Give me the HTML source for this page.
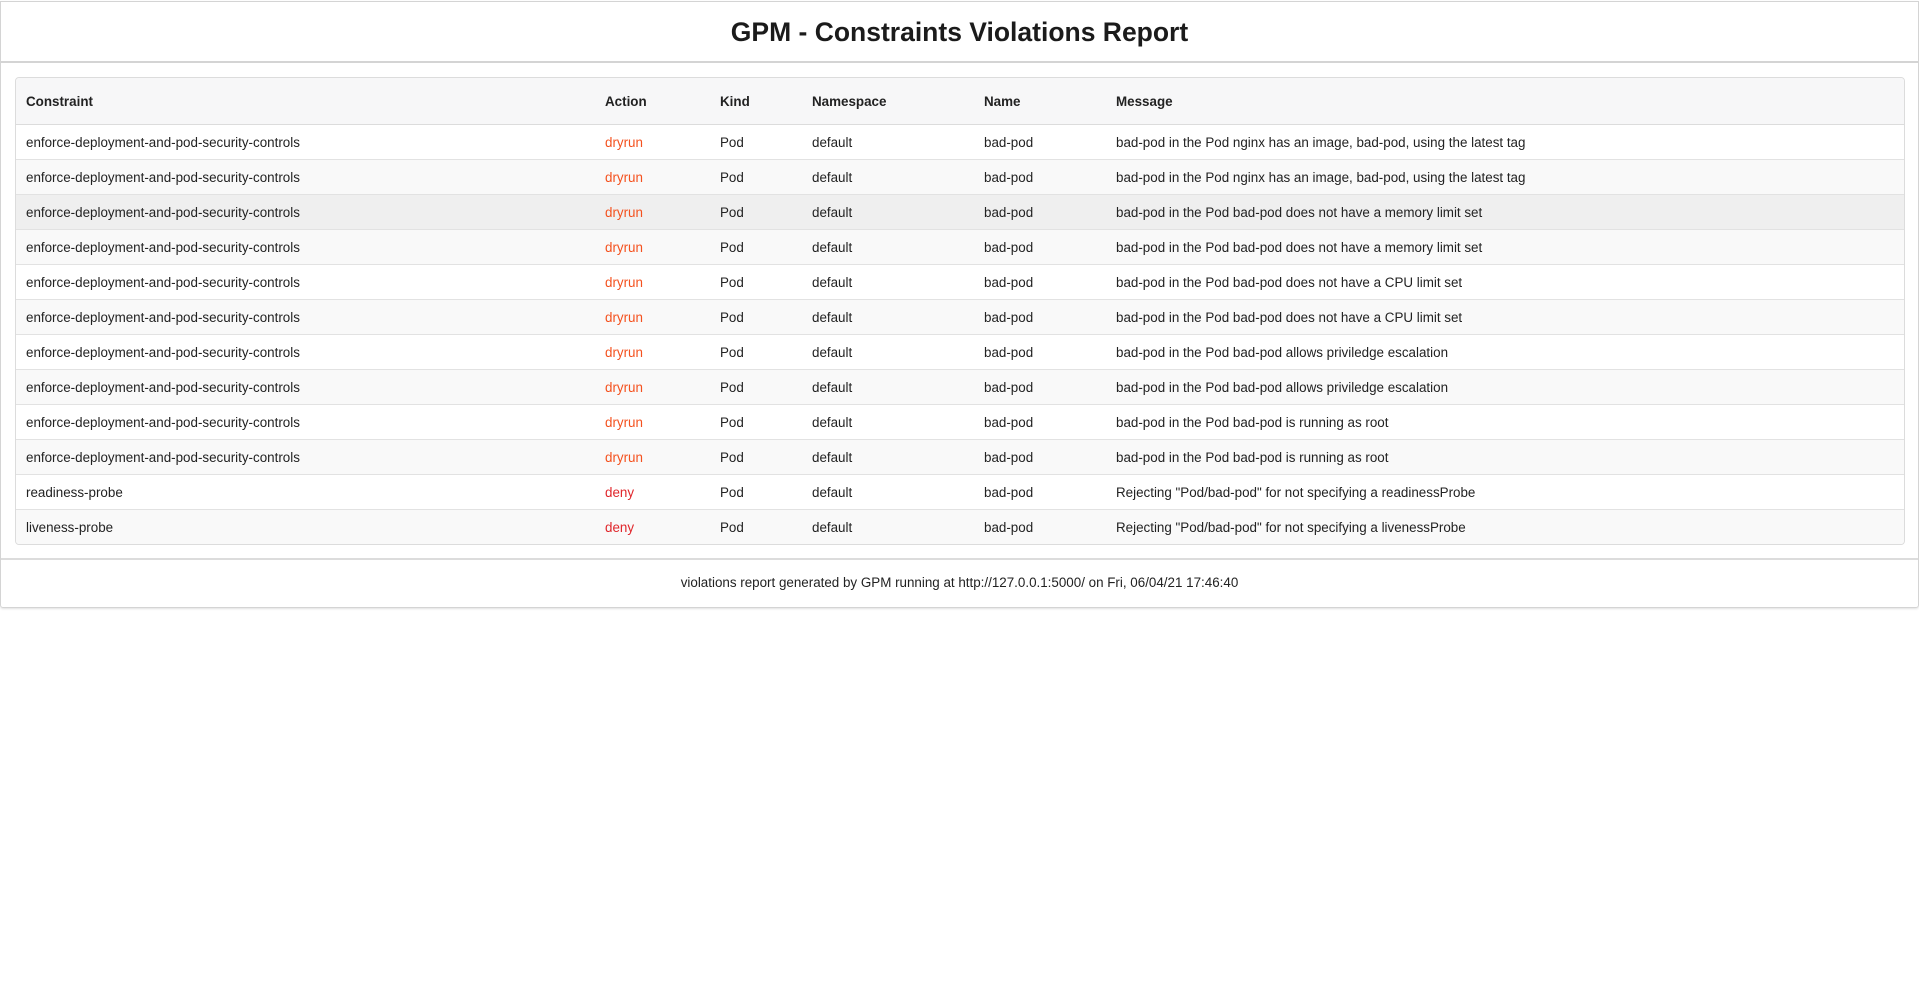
<!DOCTYPE html>
<html><head><meta charset="utf-8"><style>
html,body{margin:0;padding:0;background:#fff;width:1919px;height:995px;overflow:hidden;font-family:"Liberation Sans",sans-serif;color:#222;}
.panel{position:absolute;left:0;top:1px;width:1917px;height:605px;border:1px solid #d4d4d4;border-radius:0 0 3px 3px;box-shadow:0 1px 2px rgba(0,0,0,.12);}
.hdr{position:absolute;left:0;top:0;width:1917px;height:59px;border-bottom:2px solid #d4d4d4;text-align:center;line-height:60px;font-size:26.5px;font-weight:bold;color:#1b1b1b;}
.card{position:absolute;left:14px;top:75px;width:1888px;height:466px;border:1px solid #dcdcdc;border-radius:4px;overflow:hidden;}
table{border-collapse:collapse;width:100%;font-size:13.4px;}
th{background:#f7f7f8;height:46px;text-align:left;font-weight:bold;border-bottom:1px solid #dcdcdc;padding:0;}
td{height:34px;border-bottom:1px solid #e2e2e2;padding:0;}
tr:last-child td{border-bottom:none;height:35px;}
th:first-child,td:first-child{padding-left:10px;}
tbody tr:nth-child(even){background:#f9f9f9;}
tbody tr.hl{background:#efefef;}
.d{color:#f4511e;}.n{color:#e0262b;}
.foot{position:absolute;left:0;top:556px;width:1917px;height:49px;border-top:2px solid #dcdcdc;text-align:center;line-height:46px;font-size:13.4px;}
</style></head><body>
<div class="panel">
<div class="hdr">GPM - Constraints Violations Report</div>
<div class="card"><table>
<colgroup><col style="width:589px"><col style="width:115px"><col style="width:92px"><col style="width:172px"><col style="width:132px"><col></colgroup>
<thead><tr><th>Constraint</th><th>Action</th><th>Kind</th><th>Namespace</th><th>Name</th><th>Message</th></tr></thead>
<tbody>
<tr><td>enforce-deployment-and-pod-security-controls</td><td class="d">dryrun</td><td>Pod</td><td>default</td><td>bad-pod</td><td>bad-pod in the Pod nginx has an image, bad-pod, using the latest tag</td></tr>
<tr><td>enforce-deployment-and-pod-security-controls</td><td class="d">dryrun</td><td>Pod</td><td>default</td><td>bad-pod</td><td>bad-pod in the Pod nginx has an image, bad-pod, using the latest tag</td></tr>
<tr class="hl"><td>enforce-deployment-and-pod-security-controls</td><td class="d">dryrun</td><td>Pod</td><td>default</td><td>bad-pod</td><td>bad-pod in the Pod bad-pod does not have a memory limit set</td></tr>
<tr><td>enforce-deployment-and-pod-security-controls</td><td class="d">dryrun</td><td>Pod</td><td>default</td><td>bad-pod</td><td>bad-pod in the Pod bad-pod does not have a memory limit set</td></tr>
<tr><td>enforce-deployment-and-pod-security-controls</td><td class="d">dryrun</td><td>Pod</td><td>default</td><td>bad-pod</td><td>bad-pod in the Pod bad-pod does not have a CPU limit set</td></tr>
<tr><td>enforce-deployment-and-pod-security-controls</td><td class="d">dryrun</td><td>Pod</td><td>default</td><td>bad-pod</td><td>bad-pod in the Pod bad-pod does not have a CPU limit set</td></tr>
<tr><td>enforce-deployment-and-pod-security-controls</td><td class="d">dryrun</td><td>Pod</td><td>default</td><td>bad-pod</td><td>bad-pod in the Pod bad-pod allows priviledge escalation</td></tr>
<tr><td>enforce-deployment-and-pod-security-controls</td><td class="d">dryrun</td><td>Pod</td><td>default</td><td>bad-pod</td><td>bad-pod in the Pod bad-pod allows priviledge escalation</td></tr>
<tr><td>enforce-deployment-and-pod-security-controls</td><td class="d">dryrun</td><td>Pod</td><td>default</td><td>bad-pod</td><td>bad-pod in the Pod bad-pod is running as root</td></tr>
<tr><td>enforce-deployment-and-pod-security-controls</td><td class="d">dryrun</td><td>Pod</td><td>default</td><td>bad-pod</td><td>bad-pod in the Pod bad-pod is running as root</td></tr>
<tr><td>readiness-probe</td><td class="n">deny</td><td>Pod</td><td>default</td><td>bad-pod</td><td>Rejecting "Pod/bad-pod" for not specifying a readinessProbe</td></tr>
<tr><td>liveness-probe</td><td class="n">deny</td><td>Pod</td><td>default</td><td>bad-pod</td><td>Rejecting "Pod/bad-pod" for not specifying a livenessProbe</td></tr>
</tbody></table></div>
<div class="foot">violations report generated by GPM running at http://127.0.0.1:5000/ on Fri, 06/04/21 17:46:40</div>
</div>
</body></html>
